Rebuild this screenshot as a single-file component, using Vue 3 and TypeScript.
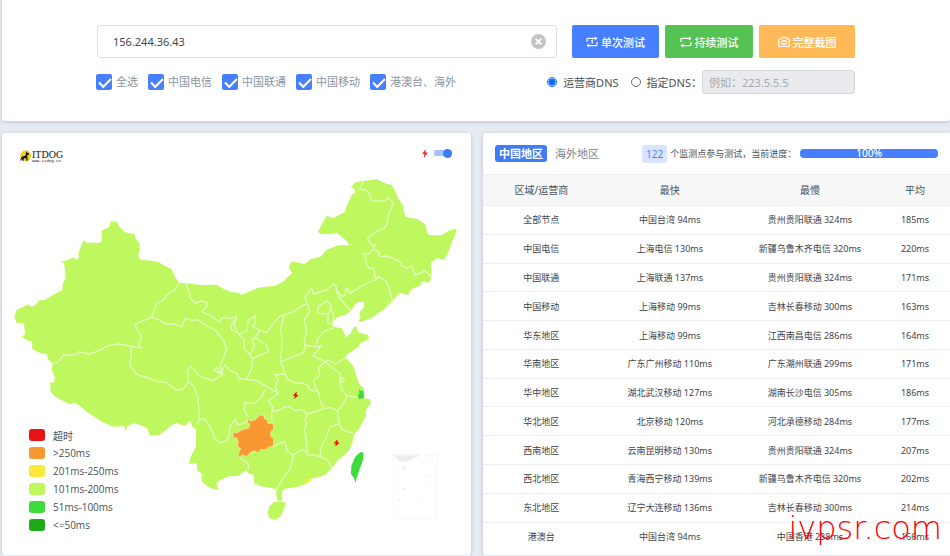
<script setup lang="ts">
import { ref } from 'vue'

interface Row {
  area: string
  fastest: string
  slowest: string
  average: string
}

const host = ref('156.244.36.43')
const dnsMode = ref('isp')
const showBolts = ref(true)
const progress = ref(100)

const lines = ref([
  { label: '全选', on: true },
  { label: '中国电信', on: true },
  { label: '中国联通', on: true },
  { label: '中国移动', on: true },
  { label: '港澳台、海外', on: true },
])

const legend = [
  { label: '超时', tone: 'timeout' },
  { label: '>250ms', tone: 'slow' },
  { label: '201ms-250ms', tone: 'fair' },
  { label: '101ms-200ms', tone: 'good' },
  { label: '51ms-100ms', tone: 'fast' },
  { label: '<=50ms', tone: 'best' },
]

const rows: Row[] = [
  { area: '全部节点', fastest: '中国台湾 94ms', slowest: '贵州贵阳联通 324ms', average: '185ms' },
  { area: '中国电信', fastest: '上海电信 130ms', slowest: '新疆乌鲁木齐电信 320ms', average: '220ms' },
  { area: '中国联通', fastest: '上海联通 137ms', slowest: '贵州贵阳联通 324ms', average: '171ms' },
  { area: '中国移动', fastest: '上海移动 99ms', slowest: '吉林长春移动 300ms', average: '163ms' },
  { area: '华东地区', fastest: '上海移动 99ms', slowest: '江西南昌电信 286ms', average: '164ms' },
  { area: '华南地区', fastest: '广东广州移动 110ms', slowest: '广东潮州联通 299ms', average: '171ms' },
  { area: '华中地区', fastest: '湖北武汉移动 127ms', slowest: '湖南长沙电信 305ms', average: '186ms' },
  { area: '华北地区', fastest: '北京移动 120ms', slowest: '河北承德移动 284ms', average: '177ms' },
  { area: '西南地区', fastest: '云南昆明移动 130ms', slowest: '贵州贵阳联通 324ms', average: '207ms' },
  { area: '西北地区', fastest: '青海西宁移动 139ms', slowest: '新疆乌鲁木齐电信 320ms', average: '202ms' },
  { area: '东北地区', fastest: '辽宁大连移动 136ms', slowest: '吉林长春移动 300ms', average: '214ms' },
  { area: '港澳台', fastest: '中国台湾 94ms', slowest: '中国香港 238ms', average: '166ms' },
]

const mainland =
  'M43 950L50 930L85 913L92 920L105 917L118 901L135 899L160 884L187 870L188 852L197 835L195 810L192 790L184 786L220 773L233 779L238 768L234 764L250 721L260 728L300 728L306 720L304 692L328 681L332 665L350 664L357 680L375 697L403 703L408 718L418 730L418 755L414 765L420 778L475 786L490 795L515 808L525 830L537 848L560 850L600 855L650 854L670 866L690 875L715 878L725 884L775 863L825 857L850 845L862 832L877 820L866 802L875 784L915 792L930 778L962 770L980 750L1015 736L1048 736L1040 723L1022 708L1010 698L990 703L960 701L954 695L966 672L980 647L1000 654L1035 636L1040 618L1055 585L1066 577L1062 566L1052 562L1068 546L1090 543L1130 538L1155 550L1175 555L1188 577L1193 593L1208 615L1216 650L1230 653L1255 658L1278 676L1280 693L1287 706L1325 706L1350 690L1370 686L1365 708L1354 728L1348 750L1332 780L1312 774L1292 788L1295 820L1290 845L1280 848L1268 842L1260 857L1240 865L1228 875L1225 886L1200 878L1178 902L1150 930L1135 938L1120 952L1085 965L1075 965L1082 950L1078 938L1092 920L1093 907L1078 905L1066 913L1055 930L1040 943L1010 953L998 967L1005 982L1025 985L1038 1012L1050 1002L1062 980L1070 980L1074 997L1105 1005L1107 1018L1080 1030L1075 1040L1040 1065L1038 1073L1060 1098L1070 1130L1078 1152L1092 1165L1093 1195L1110 1198L1113 1210L1098 1230L1098 1248L1080 1282L1060 1308L1058 1325L1048 1350L1030 1368L1015 1380L995 1405L975 1425L930 1438L915 1453L895 1460L850 1467L845 1480L847 1502L833 1502L828 1485L830 1468L780 1458L762 1448L762 1425L745 1420L738 1410L715 1428L690 1428L665 1438L650 1450L655 1470L640 1467L625 1460L605 1445L605 1420L592 1413L590 1390L567 1392L572 1370L588 1340L588 1288L578 1282L570 1262L555 1278L530 1270L515 1276L500 1288L478 1305L450 1307L442 1285L420 1275L400 1270L383 1278L376 1295L373 1278L340 1280L305 1265L280 1248L260 1235L240 1218L225 1208L210 1213L188 1202L165 1190L152 1175L150 1145L160 1150L165 1135L155 1110L158 1090L145 1078L140 1062L118 1058L97 1048L96 1025L80 1020L65 1010L75 1002L72 970L50 968Z'
const hainan = 'M820 1507L840 1504L858 1508L853 1525L842 1548L825 1560L808 1555L803 1538L808 1520Z'
const taiwan =
  'M1078 1359Q1088 1352 1091 1361L1089 1380L1080 1405L1070 1433L1067 1448L1063 1436L1053 1422L1054 1398L1065 1372Z'
const shanghai = 'M1077 1168L1082 1172L1090 1172L1092 1193L1078 1197L1073 1188L1078 1180Z'
const guizhou =
  'M698 1299L715 1297L724 1290L745 1285L750 1273L742 1267L743 1258L752 1264L768 1258L782 1244L792 1247L793 1256L804 1261L803 1270L819 1270L821 1287L812 1295L812 1308L821 1315L820 1338L807 1341L795 1350L782 1348L775 1358L764 1352L752 1357L740 1370L728 1364L717 1372L715 1363L722 1345L712 1340L715 1325L710 1314L700 1313Z'

// Province boundaries
const borders = [
  'M537 850L525 870L508 878L490 900L470 910L455 952L430 962L405 973L412 990L425 1010L415 1035L424 1043L405 1042L390 1038L355 1032L330 1036L315 1042L290 1055L265 1062L237 1055L230 1064L190 1065L175 1085L158 1092',
  'M390 1038L395 1065L390 1085L392 1100L410 1123L440 1132L470 1144L500 1147L515 1160L530 1170L550 1167L565 1145L580 1158L592 1185L597 1225L597 1270',
  'M565 1145L562 1110L572 1100L585 1110L595 1125L610 1133L640 1142L668 1123L640 1112L650 1102L660 1118L675 1095L690 1112L710 1120L715 1134L740 1138L770 1142L800 1160L835 1180',
  'M588 1270L600 1260L612 1255L630 1280L645 1315L660 1330L685 1318L690 1280L705 1258L712 1275L738 1268L742 1258',
  'M455 952L475 958L500 973L525 972L545 980L555 955L580 962L590 958L615 975L645 990L670 1020L680 1046L672 1070L660 1095L668 1123',
  'M557 850L570 880L568 890L585 910L605 903L622 908L620 920L605 935L625 944L640 950L655 967L670 952L690 956L710 950L705 968L692 975L695 990L720 1002L740 992L745 960L765 947L765 968L758 980L780 990L800 998L820 970L840 948L855 945L880 935L895 925L922 910',
  'M710 950L700 970L715 1002L732 1018L732 1045L750 1065L758 1075L782 1065L805 1055L800 1035L775 1020L770 1014L757 1016L763 1040L750 1065M780 990L765 1012M758 1075L755 1105L740 1138',
  'M852 948L842 985L845 1010L845 1046L842 1085L850 1105L855 1122L825 1125L835 1140L825 1160L835 1180L805 1202L820 1225L815 1235L815 1270',
  'M855 1122L865 1140L890 1150L905 1148L922 1155L930 1170L955 1175L962 1210L975 1225L948 1235L922 1242L905 1228L885 1232L870 1220L855 1220L840 1230L815 1235',
  'M842 1085L880 1070L910 1058L918 1035L912 1030L920 990L912 960L930 935L922 910L915 890L935 865L940 882L980 870L1000 852L1008 858L1010 870L1025 890L1035 885L1040 862L1050 880L1070 868L1090 855L1128 840',
  'M1010 870L1014 890L1025 900L1040 920L1054 932',
  'M1177 902L1168 870L1160 845L1135 830L1128 840L1120 805L1108 805L1100 795L1095 770L1087 760L1105 762L1120 748L1135 755L1140 770L1160 768L1180 775L1200 785L1206 797L1220 805L1235 798L1245 825L1260 820L1275 812L1293 830',
  'M1120 748L1127 733L1117 738L1103 715L1130 695L1150 687L1160 675L1165 645L1180 610L1165 593L1155 603L1115 602L1105 575L1095 570L1078 567L1090 545',
  'M952 940L955 920L980 902L993 915L990 930L985 943ZM993 925L1002 950L998 967M985 943L983 970L1000 973L1000 985L975 992L955 1015L948 1035',
  'M912 1035L948 1040L964 1038L956 1046L940 1068L975 1085L985 1080L1005 1092L1038 1073',
  'M975 1085L955 1105L960 1125L940 1140L945 1160L955 1175M975 1085L1005 1110L1020 1120L1020 1145L1028 1145L1033 1138L1027 1132L1020 1138L1025 1170L1040 1187L1073 1192',
  'M1040 1187L1035 1205L1012 1233L995 1223L975 1225M922 1242L915 1262L920 1270L914 1290L918 1310L922 1350',
  'M821 1338L838 1330L855 1325L862 1355L880 1365L905 1350L922 1353L922 1365L940 1365L960 1370L964 1340L975 1320L990 1282L1018 1270L1012 1233',
  'M962 1370L982 1380L995 1405M1018 1270L1025 1287L1040 1295L1060 1298M880 1365L872 1405L860 1420L840 1450L830 1468M717 1372L730 1382L745 1390L745 1410',
  'M795 1170L785 1190L765 1210L735 1208L732 1230L745 1250',
].join('')
</script>

<template>
  <main class="page">
    <form class="card search" @submit.prevent>
      <div class="search-row">
        <div class="host">
          <input v-model="host" class="host-input" type="text" aria-label="IP" />
          <button class="clear" type="button" aria-label="清除" @click="host = ''">
            <svg viewBox="0 0 16 16"><circle cx="8" cy="8" r="8" /><path d="M5 5L11 11M11 5L5 11" /></svg>
          </button>
        </div>
        <div class="actions">
          <button class="action once" type="submit">
            <svg class="icon" viewBox="0 0 12 12">
              <path d="M1 6V3.2Q1 2.4 1.8 2.4H9.4M11 6V8.8Q11 9.6 10.2 9.6H2.6M5.3 5L6.2 4.4V7.8" />
              <path class="solid" d="M8.8 .4L11.6 2.4L8.8 4.4ZM3.2 7.6L.4 9.6L3.2 11.6Z" />
            </svg>单次测试
          </button>
          <button class="action repeat" type="button">
            <svg class="icon" viewBox="0 0 12 12">
              <path d="M1 6V3.2Q1 2.4 1.8 2.4H9.4M11 6V8.8Q11 9.6 10.2 9.6H2.6" />
              <path class="solid" d="M8.8 .4L11.6 2.4L8.8 4.4ZM3.2 7.6L.4 9.6L3.2 11.6Z" />
            </svg>持续测试
          </button>
          <button class="action shot" type="button">
            <svg class="icon" viewBox="0 0 12 12">
              <path d="M1.5 3H3.5L4.3 1.4H7.7L8.5 3H10.5Q11.3 3 11.3 3.8V9.7Q11.3 10.5 10.5 10.5H1.5Q.7 10.5 .7 9.7V3.8Q.7 3 1.5 3Z" />
              <circle cx="6" cy="6.5" r="2.1" />
            </svg>完整截图
          </button>
        </div>
      </div>
      <div class="option-row">
        <div class="lines">
          <label v-for="line in lines" :key="line.label" class="line">
            <input v-model="line.on" class="tick" type="checkbox" />{{ line.label }}
          </label>
        </div>
        <div class="dns">
          <label class="dns-choice"><input v-model="dnsMode" class="dot" type="radio" name="dns" value="isp" />运营商DNS</label>
          <label class="dns-choice"><input v-model="dnsMode" class="dot" type="radio" name="dns" value="custom" />指定DNS：</label>
          <input class="dns-input" type="text" placeholder="例如：223.5.5.5" aria-label="DNS" :disabled="dnsMode === 'isp'" />
        </div>
      </div>
    </form>

    <div class="panels">
      <section class="card map-card">
        <svg class="map" viewBox="6 399 1407 1266">
          <path class="land" :d="mainland" />
          <path class="land" :d="hainan" />
          <path class="border" :d="borders" />
          <path class="slow-land" :d="guizhou" />
          <path class="fast-land" :d="taiwan" />
          <path class="fast-land" :d="shanghai" />
          <path class="fair-land" d="M916 1439L925 1433L935 1440L926 1447L918 1452Z" />
          <g class="inset">
            <rect x="1180" y="1363" width="131" height="193" />
            <path d="M1182 1366H1262L1238 1376L1216 1386L1196 1382ZM1206 1410L1214 1398L1218 1402L1210 1412ZM1290 1366L1298 1364L1298 1376ZM1286 1424H1290V1430H1286ZM1282 1460H1286V1466H1282ZM1210 1464H1216V1469H1210ZM1194 1496H1198V1502H1194ZM1260 1500H1266V1504H1260Z" />
          </g>
          <g v-if="showBolts" class="bolts">
            <path d="M889 1177L880 1187H886L884 1195L894 1185H888Z" />
            <path d="M1012 1320L1003 1330H1009L1007 1338L1017 1328H1011Z" />
          </g>
        </svg>
        <header class="map-head">
          <a class="logo" href="#">
            <svg class="dog" viewBox="0 0 36 36">
              <circle cx="20" cy="17" r="16" />
              <path d="M1 35L8 20L19 17L22 4L25 8L31 10L29 14L25 15L25 23L27 32H23L21 25L14 25L14 32H10L8 27Z" />
            </svg>
            <span class="wordmark"><span class="brand">ITDOG</span><small class="site">www.itdog.cn</small></span>
          </a>
          <label class="bolt-toggle">
            <svg class="bolt" viewBox="0 0 6 10"><path d="M3.5 0L0 5.5H2.3L1.8 10L6 4H3.5Z" /></svg>
            <input v-model="showBolts" class="switch" type="checkbox" aria-label="标记" />
          </label>
        </header>
        <ul class="legend">
          <li v-for="item in legend" :key="item.label"><span class="swatch" :class="item.tone"></span>{{ item.label }}</li>
        </ul>
      </section>

      <section class="card result-card">
        <header class="result-head">
          <nav class="tabs">
            <button class="tab active" type="button">中国地区</button>
            <button class="tab" type="button">海外地区</button>
          </nav>
          <div class="status">
            <span class="count">122</span>
            <span>个监测点参与测试，当前进度：</span>
            <div class="progress"><div class="bar" :style="{ width: progress + '%' }">{{ progress }}%</div></div>
          </div>
        </header>
        <table class="results">
          <thead>
            <tr><th class="wide">区域/运营商</th><th class="wider">最快</th><th class="wider">最慢</th><th>平均</th></tr>
          </thead>
          <tbody>
            <tr v-for="row in rows" :key="row.area">
              <td>{{ row.area }}</td>
              <td>{{ row.fastest }}</td>
              <td>{{ row.slowest }}</td>
              <td>{{ row.average }}</td>
            </tr>
          </tbody>
        </table>
        <span class="watermark">ivpsr.com</span>
      </section>
    </div>
  </main>
</template>

<style>
body {
  background: #e6ebf2;
}
</style>

<style scoped>
.page {
  padding-left: 2px;
  font-family: "Noto Sans", "Noto Sans CJK SC", sans-serif;
  font-size: 11px;
  color: #4b5055;
}
.page * {
  box-sizing: border-box;
}
input,
button {
  margin: 0;
  font: inherit;
}
.card {
  background: #fff;
  border-radius: 3px;
  box-shadow: 0 1px 4px #b9c3d0;
}
.search {
  padding: 25px 95px 27px;
  border-radius: 0 0 3px 3px;
}
.search-row {
  display: flex;
  gap: 15px;
}
.host {
  position: relative;
  flex: 1;
}
.host-input {
  display: block;
  width: 100%;
  height: 33px;
  padding: 0 36px 0 15px;
  border: 1px solid #dcdfe3;
  border-radius: 3px;
  color: #41464b;
}
.clear {
  position: absolute;
  top: 9px;
  right: 11px;
  width: 15px;
  height: 15px;
  padding: 0;
  border: 0;
  background: none;
}
.clear svg {
  display: block;
}
.clear circle {
  fill: #c4c4c4;
}
.clear path {
  stroke: #fff;
  stroke-width: 2;
}
.actions {
  display: flex;
  gap: 6px;
}
.action {
  display: flex;
  align-items: center;
  justify-content: center;
  gap: 3px;
  width: 88px;
  padding: 0;
  border: 0;
  border-radius: 2px;
  color: #fff;
  font-weight: 500;
}
.once {
  width: 87px;
  background: #467fff;
}
.repeat {
  background: #57c254;
}
.shot {
  width: 96px;
  background: #ffb956;
}
.icon {
  width: 12px;
  height: 12px;
  fill: none;
  stroke: #fff;
  stroke-width: 1.2;
}
.icon .solid {
  fill: #fff;
  stroke: none;
}
.option-row {
  display: flex;
  align-items: center;
  justify-content: space-between;
  margin-top: 12px;
}
.lines {
  display: flex;
  gap: 11px;
  color: #8c959e;
}
.line {
  display: flex;
  align-items: center;
  gap: 5px;
  line-height: 16px;
}
.tick {
  appearance: none;
  width: 14px;
  height: 14px;
  border-radius: 1px;
  background: #fff;
  box-shadow: 0 0 0 1px #467fff;
}
.tick:checked {
  background: #467fff;
}
.tick:checked::after {
  content: "";
  display: block;
  width: 10px;
  height: 5px;
  margin: 3px 2px;
  border: solid #fff;
  border-width: 0 0 2px 2px;
  transform: rotate(-45deg);
}
.dns {
  display: flex;
  align-items: center;
}
.dns-choice {
  display: flex;
  align-items: center;
  gap: 6px;
  margin-right: 12px;
}
.dns-choice:nth-child(2) {
  margin-right: 0;
}
.dot {
  appearance: none;
  width: 10px;
  height: 10px;
  border: 1px solid #6d6d6d;
  border-radius: 50%;
}
.dot:checked {
  border-color: #0d6efd;
  background: radial-gradient(circle, #0d6efd 3px, #fff 4px);
}
.dns-input {
  width: 153px;
  height: 24px;
  padding: 0 6px;
  border: 1px solid #d3d7dc;
  border-radius: 3px;
  background: #e9ebef;
}
.dns-input::placeholder {
  color: #a5abb2;
}
.panels {
  display: grid;
  grid-template-columns: 469fr 467fr;
  gap: 12px;
  margin-top: 12px;
}
.map-card {
  position: relative;
}
.map {
  display: block;
  width: 100%;
}
.land {
  fill: #bff75f;
}
.border {
  fill: none;
  stroke: #e4fcbe;
  stroke-width: 4;
  stroke-linejoin: round;
}
.slow-land {
  fill: #f99831;
  stroke: #f7e9b8;
  stroke-width: 2;
}
.fast-land {
  fill: #3edb3c;
}
.fair-land {
  fill: #f8e63a;
}
.inset rect {
  fill: none;
  stroke: #f8f8f8;
  stroke-width: 3;
}
.inset path {
  fill: #ececec;
}
.bolts path {
  fill: #f00;
  stroke: #f00;
  stroke-width: 2;
}
.map-head {
  position: absolute;
  top: 15px;
  left: 17px;
  right: 19px;
  display: flex;
  align-items: flex-start;
  justify-content: space-between;
}
.logo {
  display: flex;
  gap: 1px;
  padding-top: 2px;
  color: #111;
  text-decoration: none;
}
.dog {
  width: 12px;
  height: 12px;
}
.dog circle {
  fill: #f9ce14;
}
.dog path {
  fill: #161616;
}
.wordmark {
  display: flex;
  flex-direction: column;
  font-family: "Liberation Serif", serif;
}
.brand {
  font-size: 10px;
  line-height: 9px;
}
.site {
  font-family: "Liberation Mono", monospace;
  font-size: 4px;
  line-height: 4px;
}
.bolt-toggle {
  display: flex;
  align-items: center;
  gap: 6px;
}
.bolt {
  width: 6px;
  height: 9px;
  fill: #f5222d;
}
.switch {
  appearance: none;
  display: flex;
  align-items: center;
  width: 18px;
  height: 10px;
  background: linear-gradient(#a6c0ff, #a6c0ff) center / 100% 6px no-repeat;
  border-radius: 5px;
}
.switch::after {
  content: "";
  width: 9px;
  height: 9px;
  border-radius: 50%;
  background: #3f7cf8;
}
.switch:checked::after {
  margin-left: auto;
}
.legend {
  position: absolute;
  left: 27px;
  bottom: 21px;
  margin: 0;
  padding: 0;
  list-style: none;
  font-family: "Open Sans", "Noto Sans CJK SC", sans-serif;
  font-size: 10px;
}
.legend li {
  display: flex;
  align-items: center;
  gap: 8px;
  height: 18px;
}
.swatch {
  width: 16px;
  height: 12px;
  border-radius: 3px;
}
.timeout {
  background: #e81313;
}
.slow {
  background: #f99831;
}
.fair {
  background: #f8e93b;
}
.good {
  background: #bff75f;
}
.fast {
  background: #3edb3c;
}
.best {
  background: #1dab18;
}
.result-card {
  position: relative;
  border-radius: 3px 0 0 3px;
}
.result-head {
  display: flex;
  align-items: center;
  gap: 39px;
  height: 41px;
  padding: 0 12px;
}
.tabs {
  display: flex;
  gap: 4px;
}
.tab {
  height: 17px;
  padding: 0 4px;
  border: 0;
  border-radius: 3px;
  background: none;
  color: #7b848d;
  line-height: 17px;
}
.tab.active {
  background: #3f7cf8;
  color: #fff;
  font-weight: 700;
}
.status {
  display: flex;
  flex: 1;
  align-items: center;
  font-size: 9px;
  white-space: nowrap;
}
.count {
  margin-right: 3px;
  padding: 0 4px;
  border-radius: 3px;
  background: #d9e5ff;
  color: #467fff;
  font-size: 10px;
  line-height: 18px;
}
.progress {
  flex: 1;
  margin-left: 4px;
  border-radius: 4px;
  background: #e9ecef;
}
.bar {
  border-radius: 4px;
  background: #467fff;
  color: #fff;
  font-size: 10px;
  font-weight: 500;
  line-height: 9px;
  text-align: center;
}
.results {
  width: 100%;
  height: 376px;
  border-collapse: collapse;
  table-layout: fixed;
  font-size: 9px;
  text-align: center;
}
.results th {
  height: 31px;
  padding: 0 0 2px;
  border: solid #eceef0;
  border-width: 1px 0;
  background: #f7f7f8;
  font-size: 10px;
  font-weight: 400;
}
.wide {
  width: 25%;
}
.wider {
  width: 30%;
}
.results td {
  padding: 0;
  border-bottom: 1px solid #eceef0;
  color: #3f4347;
  white-space: nowrap;
}
.results tr:last-child td {
  border-bottom: 0;
}
.watermark {
  position: absolute;
  right: 8px;
  bottom: 8px;
  color: #f00;
  font-family: "DejaVu Sans Light", "DejaVu Sans", sans-serif;
  font-size: 32px;
  font-weight: 200;
  line-height: 38px;
}
</style>
